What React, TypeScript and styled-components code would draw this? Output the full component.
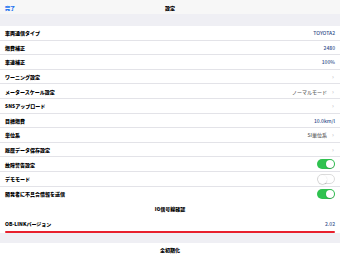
import styled, { createGlobalStyle } from "styled-components";

const Global = createGlobalStyle`
  html, body { margin: 0; padding: 0; background: #efeff4; }
  body {
    font-family: "Noto Sans CJK JP", "Liberation Sans", sans-serif;
  }
`;

const Page = styled.div`
  width: 340px;
  height: 255px;
  overflow: hidden;
  display: flex;
  flex-direction: column;
  background: #efeff4;
  & > * {
    flex: none;
  }
`;

const NavBar = styled.div`
  height: 14px;
  display: grid;
  grid-template-columns: 1fr auto 1fr;
  align-items: center;
  padding: 0 5px;
  background: #f7f7f7;
  font-size: 5px;
  font-weight: 900;
`;

const Done = styled.span`
  color: #1a73f0;
`;

const Title = styled.span`
  color: #000;
`;

const Spacer = styled.div<{ $h: number }>`
  height: ${(p) => p.$h}px;
`;

const List = styled.div`
  background: #fff;
  display: flex;
  flex-direction: column;
  & > * {
    flex: none;
  }
`;

const Row = styled.div<{ $last?: boolean }>`
  height: 14.6px;
  box-sizing: border-box;
  display: flex;
  align-items: center;
  justify-content: space-between;
  padding: 0 5px;
  border-bottom: ${(p) => (p.$last ? "none" : "0.6px solid #e3e3e8")};
  font-size: 5px;
`;

const Label = styled.span`
  font-weight: 900;
  color: #000;
`;

const Right = styled.span`
  display: flex;
  align-items: center;
  gap: 4px;
`;

const Value = styled.span<{ $tone?: "blue" | "gray" }>`
  font-weight: 500;
  color: ${(p) => (p.$tone === "gray" ? "#666" : "#34508c")};
`;

const Chevron = styled.span`
  color: #b8b8be;
  font-size: 6px;
  width: 4px;
  text-align: center;
`;

const Switch = styled.span<{ $on?: boolean }>`
  position: relative;
  width: 18px;
  height: 10px;
  border-radius: 5px;
  box-sizing: border-box;
  background: ${(p) => (p.$on ? "#2fc24f" : "#fff")};
  border: ${(p) => (p.$on ? "none" : "0.7px solid #dcdcdc")};
  &::after {
    content: "";
    position: absolute;
    top: ${(p) => (p.$on ? "0.7px" : "0.2px")};
    left: ${(p) => (p.$on ? "8.7px" : "0.2px")};
    width: 8.6px;
    height: 8.6px;
    border-radius: 50%;
    background: #fff;
    box-shadow: 0 0.5px 1px rgba(0, 0, 0, 0.3);
  }
`;

const CenterRow = styled.div<{ $h: number }>`
  height: ${(p) => p.$h}px;
  display: flex;
  align-items: center;
  justify-content: center;
  font-size: 5px;
  font-weight: 900;
  color: #000;
  background: #fff;
`;

const RedLine = styled.div`
  height: 2px;
  margin: 0 5px;
  background: #e8212e;
  border-radius: 1px;
`;

type Item = {
  label: string;
  value?: string;
  tone?: "blue" | "gray";
  chevron?: boolean;
  toggle?: boolean;
  on?: boolean;
};

const items: Item[] = [
  { label: "車両通信タイプ", value: "TOYOTA2" },
  { label: "燃費補正", value: "2480" },
  { label: "車速補正", value: "100%" },
  { label: "ワーニング設定", chevron: true },
  { label: "メータースケール設定", value: "ノーマルモード", tone: "gray", chevron: true },
  { label: "SNSアップロード", chevron: true },
  { label: "目標燃費", value: "10.0km/l" },
  { label: "単位系", value: "SI単位系", tone: "gray", chevron: true },
  { label: "履歴データ保存設定", chevron: true },
  { label: "故障警告設定", toggle: true, on: true },
  { label: "デモモード", toggle: true, on: false },
  { label: "開発者に不具合情報を送信", toggle: true, on: true },
];

export default function App() {
  return (
    <Page>
      <Global />
      <NavBar>
        <Done>完了</Done>
        <Title>設定</Title>
        <span />
      </NavBar>
      <Spacer $h={12} />
      <List>
        {items.map((it, i) => (
          <Row key={i} $last={i === items.length - 1}>
            <Label>{it.label}</Label>
            <Right>
              {it.value && <Value $tone={it.tone}>{it.value}</Value>}
              {it.chevron && <Chevron>›</Chevron>}
              {it.toggle && <Switch $on={it.on} />}
            </Right>
          </Row>
        ))}
        <CenterRow $h={15}>IG信号線確認</CenterRow>
        <Row $last>
          <Label>OB-LINKバージョン</Label>
          <Value>2.02</Value>
        </Row>
        <RedLine />
      </List>
      <Spacer $h={10} />
      <CenterRow $h={14}>全初期化</CenterRow>
    </Page>
  );
}
